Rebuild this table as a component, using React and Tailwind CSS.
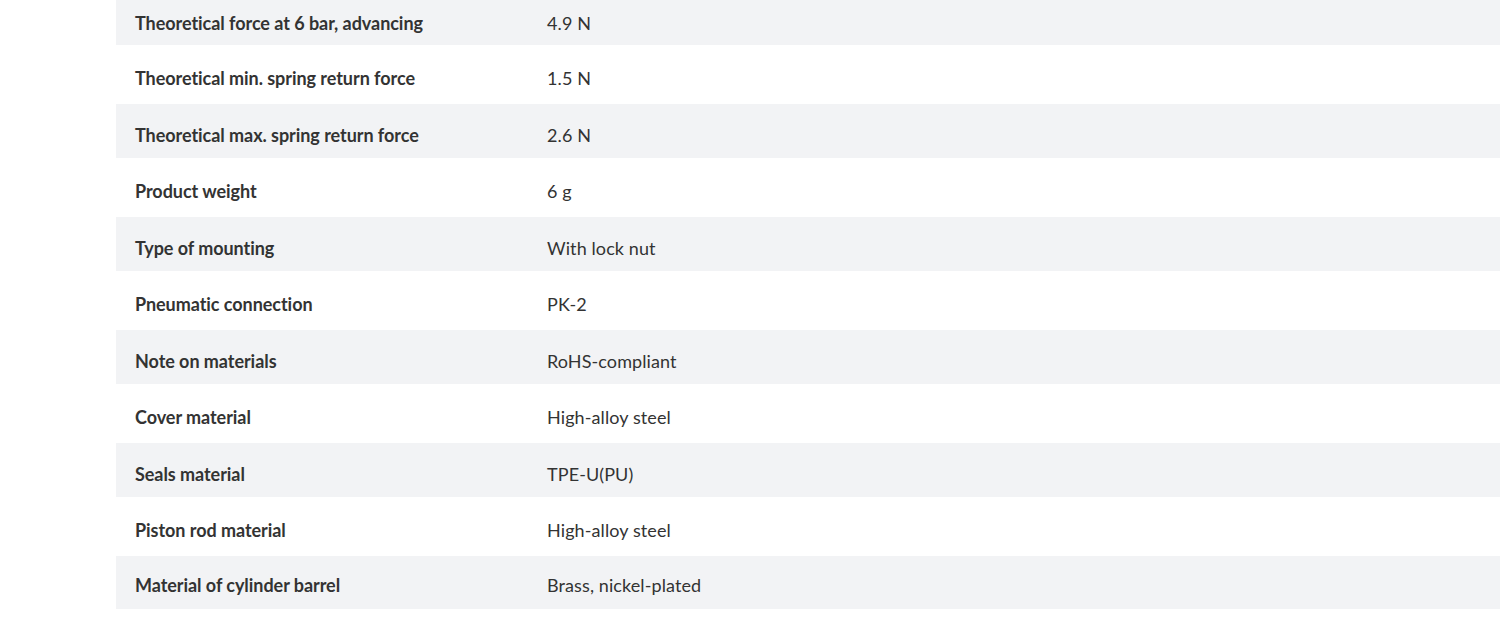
const rows = [
  ["Theoretical force at 6 bar, advancing", "4.9 N"],
  ["Theoretical min. spring return force", "1.5 N"],
  ["Theoretical max. spring return force", "2.6 N"],
  ["Product weight", "6 g"],
  ["Type of mounting", "With lock nut"],
  ["Pneumatic connection", "PK-2"],
  ["Note on materials", "RoHS-compliant"],
  ["Cover material", "High-alloy steel"],
  ["Seals material", "TPE-U(PU)"],
  ["Piston rod material", "High-alloy steel"],
  ["Material of cylinder barrel", "Brass, nickel-plated"],
];

export default function App() {
  return (
    <div
      className="w-[1500px] h-[633px] bg-white pl-[116px] overflow-hidden text-[#333333]"
      style={{ fontFamily: "Lato, 'Open Sans', sans-serif" }}
    >
      <div className="flex flex-col">
        {rows.map(([k, v], i) => {
          const gray = i % 2 === 0;
          const h =
            i === 0
              ? "h-[45px]"
              : i === rows.length - 1
              ? "h-[53px] pt-[4px]"
              : gray
              ? "h-[54px] pt-[8px]"
              : "h-[59px] pt-[6px]";
          return (
            <div
              key={i}
              className={`flex items-center ${h} ${gray ? "bg-[#f2f3f5]" : "bg-white"}`}
            >
              <div className="w-[431px] pl-[19px] text-[18px] font-bold leading-6 tracking-[-0.05px]">{k}</div>
              <div className="text-[18px] leading-6 tracking-[0.1px]">{v}</div>
            </div>
          );
        })}
      </div>
    </div>
  );
}
